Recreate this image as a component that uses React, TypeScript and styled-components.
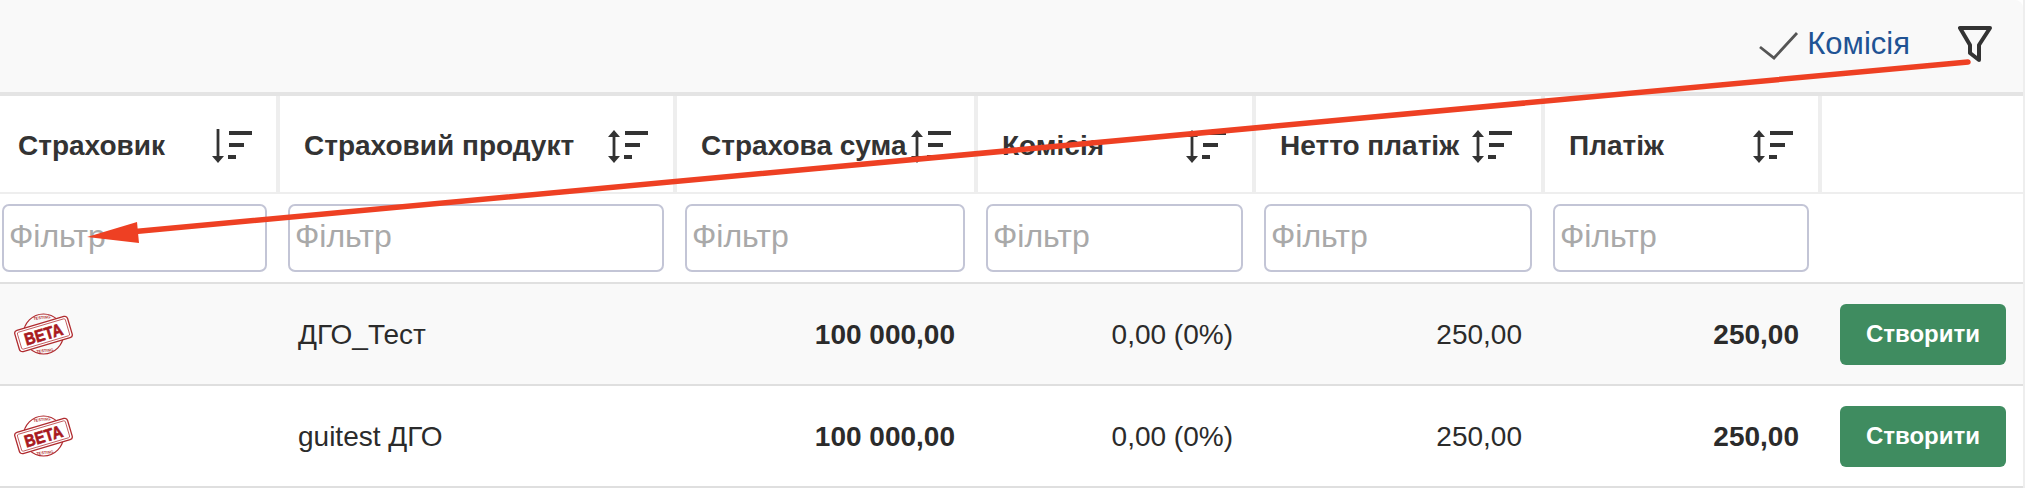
import React from "react";
import styled, { createGlobalStyle } from "styled-components";

const Global = createGlobalStyle`
  html, body { margin: 0; padding: 0; background: #fff; }
  body { font-family: "Liberation Sans", Arial, sans-serif; color: #333; }
`;

const Page = styled.div`
  position: relative;
  width: 2032px;
  height: 488px;
  overflow: hidden;
`;

const Panel = styled.div`
  width: 2031px;
  margin-left: -6px;
  border-right: 2px solid #eeeeee;
  box-sizing: border-box;
`;

const Toolbar = styled.div`
  height: 96px;
  box-sizing: border-box;
  background: #f9f9f9;
  border-bottom: 4px solid #e4e4e4;
  border-top-right-radius: 8px;
  display: flex;
  align-items: center;
  justify-content: flex-end;
  padding: 0 31px 0 0;
`;

const ColumnOption = styled.div`
  display: flex;
  align-items: center;
  gap: 8px;
  margin-right: 48px;
  margin-top: -4px;
  color: #1f5394;
  font-size: 31px;
`;

const CheckMark = styled.svg`
  margin-top: 3px;
`;

const FilterToggle = styled.div`
  display: flex;
  margin-top: -4px;
`;

const columns = "286px 397px 301px 278px 289px 277px 1fr";

const HeaderRow = styled.div`
  display: grid;
  grid-template-columns: ${columns};
  height: 98px;
  box-sizing: border-box;
  border-bottom: 2px solid #eeeeee;
`;

const HeaderCell = styled.div<{ $inset?: number }>`
  display: flex;
  align-items: center;
  justify-content: space-between;
  white-space: nowrap;
  box-sizing: border-box;
  padding: 3px ${(p) => p.$inset ?? 24}px 0 24px;
  border-right: 4px solid #eeeeee;
  font-size: 28px;
  font-weight: 700;
  color: #333;
  &:last-child { border-right: 0; }
`;

const FilterRow = styled.div`
  display: grid;
  grid-template-columns: ${columns};
  height: 90px;
  box-sizing: border-box;
  border-bottom: 2px solid #e0e0e0;
  align-items: center;
`;

const FilterCell = styled.div`
  padding: 0 13px 0 8px;
`;

const FilterInput = styled.input`
  display: block;
  width: 100%;
  height: 68px;
  box-sizing: border-box;
  border: 2px solid #c3c5d6;
  border-radius: 7px;
  padding: 0 5px 4px;
  background: #fff;
  outline: none;
  font-family: "Liberation Sans", Arial, sans-serif;
  font-size: 32px;
  &::placeholder { color: #a9a9a9; opacity: 1; }
`;

const DataRow = styled.div<{ $shaded?: boolean }>`
  display: grid;
  grid-template-columns: ${columns};
  height: 102px;
  box-sizing: border-box;
  border-bottom: 2px solid #dfdfdf;
  align-items: center;
  background: ${(p) => (p.$shaded ? "#f9f9f9" : "#ffffff")};
`;

const LogoCell = styled.div`
  padding-left: 20px;
  display: flex;
`;

const TextCell = styled.div`
  padding: 2px 0 0 18px;
  font-size: 28px;
  color: #2b2b2b;
`;

const NumberCell = styled.div<{ $strong?: boolean }>`
  padding: 2px 23px 0 0;
  text-align: right;
  font-size: 28px;
  color: #2b2b2b;
  font-weight: ${(p) => (p.$strong ? 700 : 400)};
`;

const ActionCell = styled.div`
  display: flex;
  padding-left: 18px;
`;

const CreateButton = styled.button`
  width: 166px;
  height: 61px;
  border: 0;
  border-radius: 6px;
  background: #3f8c60;
  color: #fff;
  font-family: "Liberation Sans", Arial, sans-serif;
  font-weight: 700;
  font-size: 24px;
`;

const Overlay = styled.svg`
  position: absolute;
  left: 0;
  top: 0;
  pointer-events: none;
`;

const SortIcon = ({ both = true }: { both?: boolean }) => (
  <svg width="41" height="34" viewBox="0 0 41 34" style={{ flexShrink: 0 }}>
    <path d={both ? "M7 3V31" : "M7 0V30"} stroke="#333" strokeWidth="2.8" fill="none" />
    {both && <path d="M1 8L7 1L13 8Z" fill="#333" />}
    <path d="M1 27L7 34L13 27Z" fill="#333" />
    <rect x="18" y="2" width="23" height="4" fill="#333" />
    <rect x="18" y="14" width="15" height="4" fill="#333" />
    <rect x="17" y="26" width="8" height="4" fill="#333" />
  </svg>
);

const BetaStamp = () => (
  <svg width="60" height="44" viewBox="0 0 60 44">
    <g fill="none" stroke="#b02a2e">
      <circle cx="29.5" cy="22" r="20" strokeWidth="1.2" />
      <g transform="rotate(-16.5 29.5 22)">
        <rect x="2" y="11" width="55" height="22" rx="3" fill="#fff" strokeWidth="1.3" />
        <rect x="4.5" y="13.2" width="50" height="17.6" rx="1.5" strokeWidth="0.7" />
        <text x="29.5" y="28.2" textAnchor="middle" textLength="39" lengthAdjust="spacingAndGlyphs" fill="#a9191e" stroke="#a9191e" strokeWidth="0.7" fontFamily="'Liberation Sans', sans-serif" fontWeight="700" fontSize="17">BETA</text>
      </g>
    </g>
    <text x="28" y="7" transform="rotate(-6 28 7)" textAnchor="middle" fill="#b02a2e" fontFamily="'Liberation Sans', sans-serif" fontWeight="700" fontSize="4">TESTING</text>
    <text x="31" y="40" transform="rotate(-6 31 40)" textAnchor="middle" fill="#b02a2e" fontFamily="'Liberation Sans', sans-serif" fontWeight="700" fontSize="4">TESTING</text>
  </svg>
);

const headers: { label: string; both?: boolean; inset?: number }[] = [
  { label: "Страховик", both: false },
  { label: "Страховий продукт", inset: 25 },
  { label: "Страхова сума", inset: 23 },
  { label: "Комісія", inset: 26 },
  { label: "Нетто платіж", inset: 29 },
  { label: "Платіж", inset: 25 },
];

const rows = ["ДГО_Тест", "guitest ДГО"];

export default function App() {
  return (
    <Page>
      <Global />
      <Panel>
        <Toolbar>
          <ColumnOption>
            <CheckMark width="42" height="30" viewBox="0 0 42 30">
              <path d="M3 16L17 27L40 2" fill="none" stroke="#555" strokeWidth="2.8" />
            </CheckMark>
            Комісія
          </ColumnOption>
          <FilterToggle>
            <svg width="34" height="38" viewBox="0 0 34 38">
              <path d="M2 3H32L21 20V35L12 28V20Z" fill="none" stroke="#333" strokeWidth="4" strokeLinejoin="round" />
            </svg>
          </FilterToggle>
        </Toolbar>
        <HeaderRow>
          {headers.map((h) => (
            <HeaderCell key={h.label} $inset={h.inset}>
              {h.label}
              <SortIcon both={h.both !== false} />
            </HeaderCell>
          ))}
          <HeaderCell />
        </HeaderRow>
        <FilterRow>
          {headers.map((h) => (
            <FilterCell key={h.label}>
              <FilterInput placeholder="Фільтр" readOnly />
            </FilterCell>
          ))}
        </FilterRow>
        {rows.map((name, i) => (
          <DataRow key={name} $shaded={i === 0}>
            <LogoCell>
              <BetaStamp />
            </LogoCell>
            <TextCell>{name}</TextCell>
            <NumberCell $strong>100 000,00</NumberCell>
            <NumberCell>0,00 (0%)</NumberCell>
            <NumberCell>250,00</NumberCell>
            <NumberCell $strong>250,00</NumberCell>
            <ActionCell>
              <CreateButton>Створити</CreateButton>
            </ActionCell>
          </DataRow>
        ))}
      </Panel>
      <Overlay width="2032" height="488" viewBox="0 0 2032 488">
        <path d="M1968 62L130 232" stroke="#ee4023" strokeWidth="5.5" strokeLinecap="round" fill="none" />
        <path d="M87 237L137 222L139 243Z" fill="#ee4023" />
      </Overlay>
    </Page>
  );
}
